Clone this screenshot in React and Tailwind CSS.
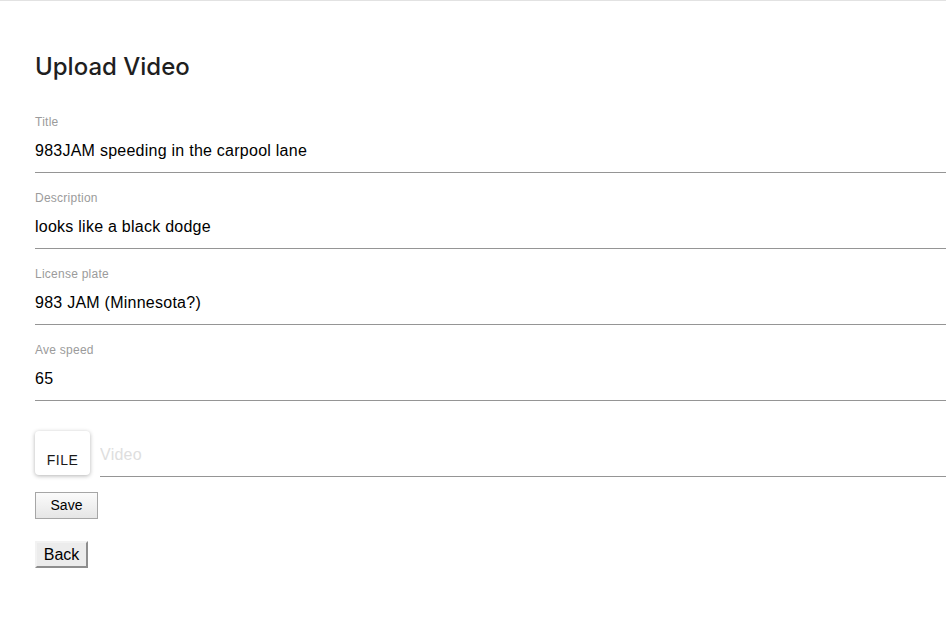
import React, { useState } from 'react';

const fields = [
    { key: 'title', label: 'Title', value: '983JAM speeding in the carpool lane' },
    { key: 'description', label: 'Description', value: 'looks like a black dodge' },
    { key: 'plate', label: 'License plate', value: '983 JAM (Minnesota?)' },
    { key: 'speed', label: 'Ave speed', value: '65' },
];

const Field = ({ label, value, onChange }) => (
    <div className="pb-4">
        <label className="block h-4 text-[12px] leading-[18px] tracking-[0.25px] text-[#9b9b9b]">{label}</label>
        <input
            type="text"
            value={value}
            onChange={onChange}
            className="block w-full h-[44px] pt-[1px] text-[16px] tracking-[0.25px] text-black bg-transparent outline-none border-b border-[#959595]"
        />
    </div>
);

const App = () => {
    const [formData, setFormData] = useState(
        Object.fromEntries(fields.map(f => [f.key, f.value]))
    );

    return (
        <div className="min-h-[636px] bg-white border-t border-[#e2e2e2]" style={{ fontFamily: '"Liberation Sans", Arial, sans-serif' }}>
            <div className="pl-[35px] pt-[50px]">
                <h1 className="h-8 text-[24px] leading-8 font-medium text-[#1f1f1f] tracking-[0px]" style={{ fontFamily: 'Inter, "Liberation Sans", sans-serif' }}>
                    Upload Video
                </h1>

                <form className="mt-[30px]" onSubmit={(e) => e.preventDefault()}>
                    {fields.map(f => (
                        <Field
                            key={f.key}
                            label={f.label}
                            value={formData[f.key]}
                            onChange={(e) => setFormData({ ...formData, [f.key]: e.target.value })}
                        />
                    ))}

                    {/* File picker */}
                    <div className="flex items-end mt-[14px]">
                        <button
                            type="button"
                            className="w-[55px] h-[44px] mb-[2px] pt-[15px] bg-white rounded-[4px] shadow-[0_1px_4px_rgba(0,0,0,0.3)] text-[14px] text-[#1a1a1a] tracking-[0.5px]"
                        >
                            FILE
                        </button>
                        <input
                            type="text"
                            placeholder="Video"
                            className="flex-1 ml-[10px] h-[44px] text-[16px] tracking-[0.25px] bg-transparent outline-none border-b border-[#959595] placeholder:text-[#dedede]"
                        />
                    </div>

                    <div className="mt-[15px]">
                        <button
                            type="submit"
                            className="w-[63px] h-[27px] text-[14px] text-black border border-[#a6a6a6] bg-gradient-to-b from-[#fbfbfb] to-[#e6e6e6]"
                        >
                            Save
                        </button>
                    </div>
                </form>

                <div className="mt-[22px]">
                    <button
                        type="button"
                        className="w-[53px] h-[27px] text-[16px] text-black bg-[#ececec] border-2 border-t-[#f2f2f2] border-l-[#f2f2f2] border-r-[#8e8e8e] border-b-[#8e8e8e]"
                    >
                        Back
                    </button>
                </div>
            </div>
        </div>
    );
};

export default App;
